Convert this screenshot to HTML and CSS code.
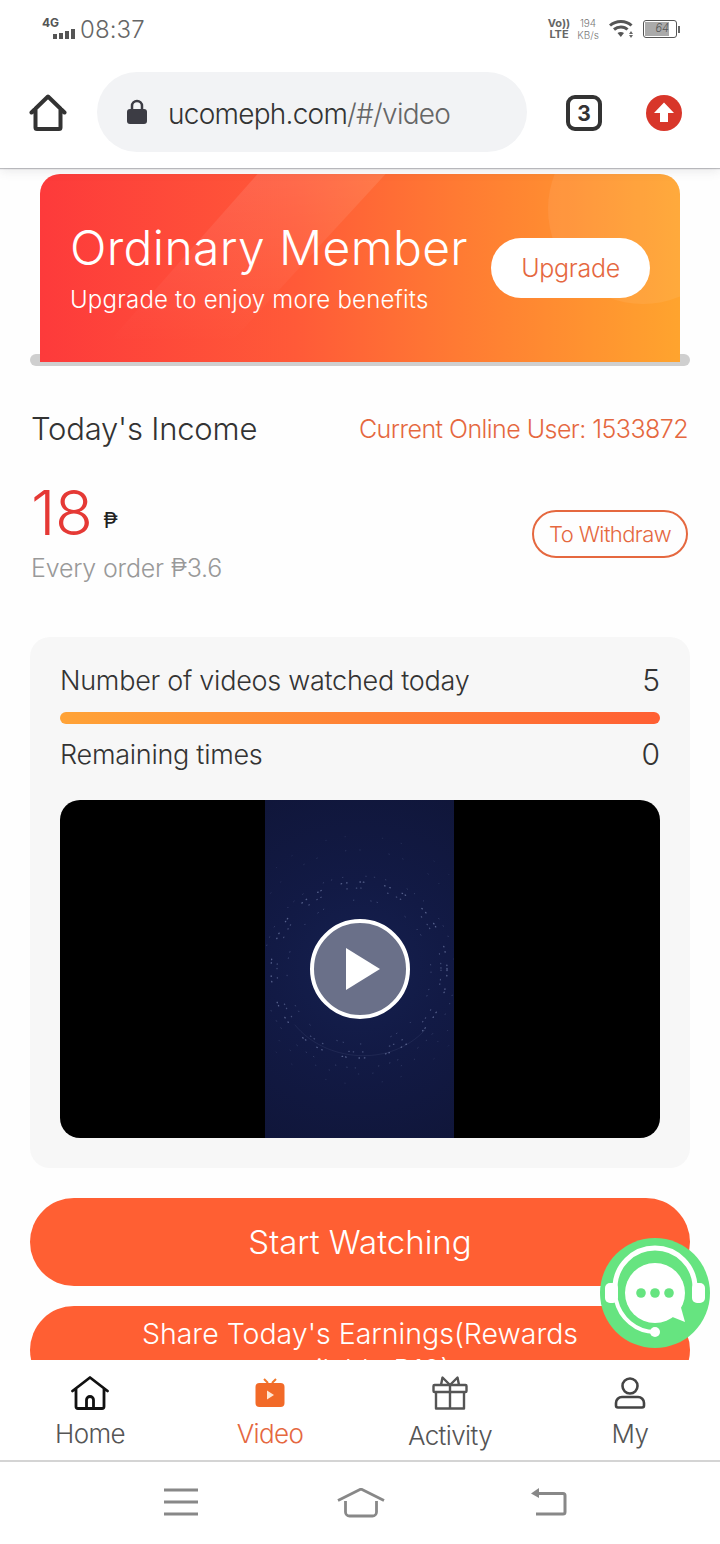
FILE: index.html
```html
<!DOCTYPE html>
<html lang="en">
<head>
<meta charset="utf-8">
<title>Video</title>
<link rel="stylesheet" href="styles.css">
</head>
<body>
<header class="top">
  <div class="status">
    <div class="status-left">
      <div class="signal">
        <span class="net">4G</span>
        <span class="bars"><i class="b1"></i><i class="b2"></i><i class="b3"></i><i class="b4"></i></span>
      </div>
      <span class="time">08:37</span>
    </div>
    <div class="status-right">
      <div class="volte"><span>Vo))</span><span>LTE</span></div>
      <div class="speed"><span>194</span><span>KB/s</span></div>
      <svg class="wifi" width="26" height="20" viewBox="0 0 26 20"><path d="M1 6.500C7 1 17 1 22.500 6.500" fill="none" stroke="#555" stroke-width="3"/><path d="M5 10.500C9 7 15 7 18.500 10.500" fill="none" stroke="#555" stroke-width="3"/><path d="M8.500 14C10.500 12.500 13 12.500 15 14L11.800 18Z" fill="#555"/><path d="M22 12l2 3h-4zM22 19l2-3h-4z" fill="#666"/></svg>
      <div class="battery"><div class="battery-fill"><span>64</span></div></div>
      <i class="battery-tip"></i>
    </div>
  </div>
  <div class="browser">
    <svg class="b-home" width="38" height="38" viewBox="0 0 38 38"><path d="M2.500 18.500L19 2.500l16.500 16M6.500 14.500V33.500a1.500 1.500 0 0 0 1.500 1.500h22a1.500 1.500 0 0 0 1.500-1.500V14.500" fill="none" stroke="#333" stroke-width="4" stroke-linecap="round" stroke-linejoin="round"/></svg>
    <div class="url">
      <svg class="lock" width="22" height="26" viewBox="0 0 22 26"><path d="M6 11V7a5 5 0 0 1 10 0v4" fill="none" stroke="#3c3c44" stroke-width="2.500"/><rect x="1" y="10" width="20" height="15" rx="3" fill="#3c3c44"/></svg>
      <span class="url-text">ucomeph.com<span class="url-path">/#/video</span></span>
    </div>
    <div class="tabs-count">3</div>
    <svg class="up" width="36" height="36" viewBox="0 0 36 36"><circle cx="18" cy="18" r="18" fill="#d8362a"/><path d="M18 7.500L28 18h-6v9h-8v-9H8z" fill="#fff"/></svg>
  </div>
</header>

<main class="content">
  <section class="member">
    <div class="banner">
      <div class="banner-text">
        <div class="banner-title">Ordinary Member</div>
        <div class="banner-sub">Upgrade to enjoy more benefits</div>
      </div>
      <div class="upgrade">Upgrade</div>
    </div>
    <div class="shelf"></div>
  </section>

  <section class="income">
    <div class="income-head">
      <span class="income-title">Today's Income</span>
      <span class="online">Current Online User: 1533872</span>
    </div>
    <div class="income-body">
      <div>
        <div class="amount"><span class="amount-num">18</span><span class="amount-cur">₱</span></div>
        <div class="per-order">Every order ₱3.6</div>
      </div>
      <div class="withdraw">To Withdraw</div>
    </div>
  </section>

  <section class="card">
    <div class="row"><span>Number of videos watched today</span><span class="row-num">5</span></div>
    <div class="progress"></div>
    <div class="row row-second"><span>Remaining times</span><span class="row-num">0</span></div>
    <div class="video">
      <div class="poster">
        <svg class="dots" width="189" height="338" viewBox="0 0 189 338">
          <g fill="none" stroke="#8f9cc8" stroke-linecap="round">
            <circle cx="94" cy="170" r="88" stroke-width="1.300" stroke-dasharray="0.500 5 0.500 13 0.500 3 0.500 21" opacity=".55"/>
            <circle cx="94" cy="170" r="82" stroke-width="1.200" stroke-dasharray="0.500 9 0.500 4 0.500 27" opacity=".42"/>
            <circle cx="94" cy="172" r="72" stroke-width="1" stroke-dasharray="0.500 17 0.500 6 0.500 31" opacity=".38"/>
            <circle cx="94" cy="172" r="96" stroke-width="1" stroke-dasharray="0.500 23 0.500 8 0.500 11" opacity=".3"/>
            <circle cx="94" cy="162" r="112" stroke-width="1" stroke-dasharray="0.500 29 0.500 14" opacity=".22"/>
            <circle cx="94" cy="160" r="124" stroke-width="1" stroke-dasharray="0.500 37 0.500 19" opacity=".16"/>
            <path d="M30 225C60 262 125 268 160 230" stroke-width="1" opacity=".1"/>
          </g>
        </svg>
        <div class="play">
          <svg width="34" height="42" viewBox="0 0 34 42"><path d="M0 0L34 21 0 42Z" fill="#fff"/></svg>
        </div>
      </div>
    </div>
  </section>

  <div class="btn btn-start">Start Watching</div>
  <div class="btn btn-share">Share Today's Earnings(Rewards available:₱10)</div>
</main>

<nav class="tabbar">
  <div class="tab">
    <svg width="38" height="34" viewBox="0 0 38 34"><path d="M1.500 15L19 1.500 36.500 15M5 12.500V30.500a2 2 0 0 0 2 2h24a2 2 0 0 0 2-2V12.500M15.500 32V24a3.500 3.500 0 0 1 7 0v8" fill="none" stroke="#111" stroke-width="2.800" stroke-linecap="round" stroke-linejoin="round"/></svg>
    <span class="tab-label">Home</span>
  </div>
  <div class="tab tab-active">
    <svg width="32" height="34" viewBox="0 0 32 34"><path d="M10 3l4 4M22 3l-4 4" stroke="#f0772c" stroke-width="2" fill="none"/><rect x="1.500" y="7" width="29" height="24" rx="4" fill="#f26a28"/><path d="M13 14.500l7 4.500-7 4.500z" fill="#ffe6d2"/></svg>
    <span class="tab-label">Video</span>
  </div>
  <div class="tab tab-gift">
    <svg width="36" height="34" viewBox="0 0 36 34"><g fill="none" stroke="#555" stroke-width="2.400" stroke-linejoin="round"><rect x="1.500" y="9" width="33" height="7" rx="1"/><path d="M4 16V32.500H32V16M18 9V32.500M18 9L10.500 1.500 9 9M18 9L25.500 1.500 27 9"/></g></svg>
    <span class="tab-label">Activity</span>
  </div>
  <div class="tab">
    <svg width="32" height="32" viewBox="0 0 32 32"><g fill="none" stroke="#444" stroke-width="2.600"><ellipse cx="16" cy="9" rx="7.500" ry="7.500"/><path d="M8 20H24a6 6 0 0 1 6 6v2.500a2 2 0 0 1-2 2H4a2 2 0 0 1-2-2V26a6 6 0 0 1 6-6Z"/></g></svg>
    <span class="tab-label">My</span>
  </div>
</nav>

<footer class="sysnav">
  <svg width="34" height="28" viewBox="0 0 34 28"><path d="M0 2H34M0 14H34M0 26H34" stroke="#888" stroke-width="3"/></svg>
  <svg class="sys-home" width="48" height="30" viewBox="0 0 48 30"><path d="M1 12.500L24 1 47 12.500" fill="none" stroke="#888" stroke-width="2.800" stroke-linejoin="round"/><path d="M8.500 13V24a4 4 0 0 0 4 4H35.500a4 4 0 0 0 4-4V13" fill="none" stroke="#888" stroke-width="2.800"/></svg>
  <svg width="36" height="28" viewBox="0 0 36 28"><path d="M6 5.500H32a2 2 0 0 1 2 2V24a2 2 0 0 1-2 2H5" fill="none" stroke="#888" stroke-width="3"/><path d="M0 5.500L8 0V10Z" fill="#888"/></svg>
</footer>

<aside class="chat">
  <svg width="110" height="110" viewBox="0 0 110 110">
    <circle cx="55" cy="55" r="55" fill="#66e480"/>
    <path d="M15 50A40 40 0 0 1 95 50" fill="none" stroke="#fff" stroke-width="5"/>
    <path d="M16 62C20 80 36 94 55 94" fill="none" stroke="#fff" stroke-width="4" stroke-linecap="round"/>
    <rect x="5" y="45" width="13" height="20" rx="5" fill="#fff"/>
    <rect x="92" y="45" width="13" height="20" rx="5" fill="#fff"/>
    <circle cx="55" cy="94" r="5" fill="#fff"/>
    <path d="M55 25a30 30 0 1 1 0 60A30 30 0 0 1 55 25Z" fill="#fff"/>
    <path d="M70 78L85 84 80 66Z" fill="#fff"/>
    <circle cx="41" cy="55" r="4.800" fill="#66e480"/>
    <circle cx="55" cy="55" r="4.800" fill="#66e480"/>
    <circle cx="69" cy="55" r="4.800" fill="#66e480"/>
  </svg>
</aside>
</body>
</html>
```

FILE: styles.css
```css
* { box-sizing: border-box; }
html, body { margin: 0; padding: 0; }
body {
  position: relative;
  width: 720px;
  height: 1544px;
  overflow: hidden;
  display: flex;
  flex-direction: column;
  background: #fff;
  font-family: Inter, "Liberation Sans", sans-serif;
  font-weight: 300;
  color: #333;
}

/* top */
.top { height: 168px; flex: none; background: #fff; position: relative; z-index: 2; box-shadow: 0 1px 1px rgba(80,80,90,.35), 0 3px 10px rgba(80,80,90,.12); }
.status { height: 58px; display: flex; justify-content: space-between; align-items: center; padding: 0 40px 0 42px; }
.status-left { display: flex; align-items: center; gap: 5px; }
.signal { width: 33px; height: 24px; display: flex; flex-direction: column; }
.net { font-size: 12px; line-height: 12px; font-weight: 700; color: #555; }
.bars { display: flex; align-items: flex-end; gap: 2px; height: 10px; justify-content: flex-end; }
.bars i { width: 4px; background: #555; display: block; }
.b1 { height: 5px; } .b2 { height: 6px; } .b3 { height: 8px; } .b4 { height: 10px; }
.time { font-size: 24px; color: #666; font-weight: 300; letter-spacing: .1px; }
.status-right { display: flex; align-items: center; }
.volte { display: flex; flex-direction: column; font-size: 11px; line-height: 11px; font-weight: 700; color: #666; align-items: center; width: 20px; }
.speed { display: flex; flex-direction: column; font-size: 10px; line-height: 12px; color: #777; align-items: center; margin-left: 6px; width: 26px; }
.wifi { margin-left: 8px; }
.battery { margin-left: 8px; width: 34px; height: 18px; border: 1.500px solid #555; border-radius: 3px; padding: 1px; }
.battery-fill { width: 24px; height: 100%; background: #aaa; font-size: 11px; line-height: 13px; font-style: italic; color: #555; text-align: right; }
.battery-tip { display: block; width: 2px; height: 7px; background: #666; margin-left: 1px; }

.browser { height: 110px; display: flex; align-items: flex-start; padding: 14px 38px 0 29px; }
.b-home { margin-top: 22px; flex: none; }
.url { margin-left: 30px; width: 430px; height: 80px; border-radius: 40px; background: #f2f3f5; display: flex; align-items: center; padding-left: 29px; flex: none; }
.lock { flex: none; }
.url-text { margin: 3px 0 0 20px; font-size: 28px; color: #333; font-weight: 300; letter-spacing: -.75px; }
.url-path { color: #666; }
.tabs-count { margin: 23px 0 0 39px; width: 36px; height: 36px; border: 4px solid #333; border-radius: 9px; font-size: 21px; font-weight: 700; display: flex; align-items: center; justify-content: center; color: #333; flex: none; }
.up { margin: 23px 0 0 44px; flex: none; }

/* content */
.content { height: 1192px; flex: none; overflow: hidden; background: #fefefe; padding: 6px 30px 0; display: flex; flex-direction: column; }
.member { flex: none; }
.banner {
  position: relative;
  z-index: 1;
  overflow: hidden;
  margin: 0 10px;
  height: 188px;
  border-radius: 20px 20px 0 0;
  display: flex;
  align-items: flex-start;
  justify-content: space-between;
  padding: 46px 30px 0;
  background: linear-gradient(90deg, #fd3a3b 0%, #ff5a38 40%, #ff7a33 65%, #ffa42e 100%);
  color: #fff;
}
.banner::before {
  content: "";
  position: absolute;
  inset: 0;
  background: linear-gradient(to bottom, rgba(255,255,255,.1) 0%, rgba(255,255,255,.04) 55%, rgba(255,255,255,0) 90%);
  clip-path: polygon(34% 0, 54% 0, 27% 100%, 8% 100%);
}
.banner::after {
  content: "";
  position: absolute;
  width: 190px;
  height: 190px;
  border-radius: 50%;
  right: -58px;
  top: -60px;
  background: rgba(255,255,255,.07);
}
.banner-text { position: relative; z-index: 1; }
.banner-title { font-size: 48px; line-height: 56px; letter-spacing: .35px; }
.banner-sub { font-size: 24px; line-height: 30px; margin-top: 9px; letter-spacing: .2px; }
.upgrade { position: relative; z-index: 1; margin-top: 18px; width: 159px; height: 60px; border-radius: 30px; background: #fff; color: #e5683f; font-size: 25px; letter-spacing: -.3px; display: flex; align-items: center; justify-content: center; }
.shelf { height: 12px; margin-top: -8px; background: #cfcfcf; border-radius: 6px; }

.income { flex: none; }
.income-head { display: flex; justify-content: space-between; align-items: center; padding: 0 2px 0 1px; height: 44px; margin-top: 41px; }
.income-title { font-size: 31px; color: #333; letter-spacing: -.2px; margin-top: -2px; }
.online { font-size: 25px; color: #e5683f; letter-spacing: -.55px; }
.income-body { display: flex; justify-content: space-between; align-items: center; padding: 0 2px 0 1px; margin-top: 24px; }
.amount { display: flex; align-items: flex-start; height: 70px; }
.amount-num { font-size: 62px; line-height: 72px; margin-top: 2px; color: #e53935; letter-spacing: -.5px; }
.amount-cur { font-size: 22px; line-height: 24px; margin: 33px 0 0 11px; font-weight: 400; color: #222; }
.per-order { font-size: 25px; color: #999; line-height: 32px; margin-top: 7px; letter-spacing: -.2px; }
.withdraw { width: 156px; height: 48px; border: 2px solid #e5683f; border-radius: 24px; color: #e5683f; font-size: 22px; letter-spacing: -.6px; display: flex; align-items: center; justify-content: center; margin-top: 9px; }

.card { flex: none; margin-top: 53px; height: 531px; border-radius: 20px; background: #f7f7f7; padding: 23px 30px 0; }
.row { display: flex; justify-content: space-between; align-items: center; height: 40px; font-size: 27px; letter-spacing: -.27px; color: #333; }
.row-num { font-size: 30px; letter-spacing: 0; }
.row-second { margin-top: 10px; }
.progress { height: 12px; margin-top: 12px; border-radius: 6px; background: linear-gradient(90deg, #ffa337, #ff5f33); }
.video { margin-top: 26px; height: 338px; border-radius: 20px; background: #000; overflow: hidden; display: flex; justify-content: center; }
.poster { position: relative; width: 189px; height: 338px; margin-left: -1px; background: radial-gradient(circle at 50% 50%, #15204f 0%, #121a45 45%, #10163a 100%); display: flex; align-items: center; justify-content: center; }
.dots { position: absolute; inset: 0; }
.play { position: relative; width: 100px; height: 100px; border-radius: 50%; border: 4px solid #fff; background: #6a7089; display: flex; align-items: center; justify-content: center; padding-left: 6px; }
.play svg { display: block; }

.btn { flex: none; background: #ff5f33; color: #fff; text-align: center; border-radius: 44px; }
.btn-start { margin-top: 30px; height: 88px; line-height: 88px; font-size: 33px; }
.btn-share { margin-top: 20px; height: 88px; padding: 10px 90px 0; font-size: 28.500px; line-height: 36px; }

/* bottom */
.tabbar { height: 100px; flex: none; background: #fff; display: grid; grid-template-columns: repeat(4, 180px); position: relative; z-index: 1; }
.tab { display: flex; flex-direction: column; align-items: center; justify-content: flex-start; padding-top: 16px; color: #555; height: 100px; }
.tab svg { height: 34px; display: block; }
.tab-label { font-size: 26px; line-height: 32px; margin-top: 8px; letter-spacing: -.6px; }
.tab-gift .tab-label { margin-top: 10px; }
.tab-active .tab-label { color: #e5683f; }
.sysnav { flex: none; height: 84px; border-top: 2px solid #d4d4d4; background: #fff; display: flex; align-items: flex-start; padding: 26px 0 0 164px; }
.sys-home { margin: 0 146px 0 139px; }

.chat { position: absolute; left: 600px; top: 1238px; width: 110px; height: 110px; z-index: 3; }
.chat svg { display: block; }
```
